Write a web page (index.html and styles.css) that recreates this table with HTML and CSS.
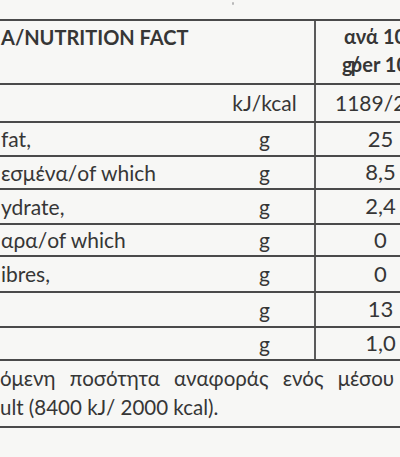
FILE: index.html
```html
<!DOCTYPE html>
<html lang="el">
<head>
  <meta charset="UTF-8" />
  <meta name="viewport" content="width=device-width, initial-scale=1.0"/>
  <title>Nutrition facts</title>
  <link rel="stylesheet" href="styles.css">
</head>
<body>

<div class="sheet">
  <span class="speck"></span>

  <table class="facts">
    <!-- header -->
    <tr class="head">
      <th class="name">A/NUTRITION FACT</th>
      <th class="unit"></th>
      <th class="val">ανά 100 g<br>g<span class="slash">/</span>per 100 g</th>
    </tr>

    <tr class="energy">
      <td class="name"></td>
      <td class="unit">kJ/kcal</td>
      <td class="val">1189/284</td>
    </tr>
    <tr class="r1">
      <td class="name">fat,</td>
      <td class="unit">g</td>
      <td class="val">25</td>
    </tr>
    <tr class="r2">
      <td class="name">εσμένα/of which</td>
      <td class="unit">g</td>
      <td class="val">8,5</td>
    </tr>
    <tr class="r3">
      <td class="name">ydrate,</td>
      <td class="unit">g</td>
      <td class="val">2,4</td>
    </tr>
    <tr class="r4">
      <td class="name">αρα/of which</td>
      <td class="unit">g</td>
      <td class="val">0</td>
    </tr>
    <tr class="r5">
      <td class="name">ibres,</td>
      <td class="unit">g</td>
      <td class="val">0</td>
    </tr>
    <tr class="r6">
      <td class="name"></td>
      <td class="unit">g</td>
      <td class="val">13</td>
    </tr>
    <tr class="r7">
      <td class="name"></td>
      <td class="unit">g</td>
      <td class="val">1,0</td>
    </tr>

    <!-- footnote -->
    <tr class="note">
      <td colspan="3">
        <p class="note-line wide">όμενη ποσότητα αναφοράς ενός μέσου</p>
        <p class="note-line">ult (8400 kJ/ 2000 kcal).</p>
      </td>
    </tr>
  </table>
</div>

</body>
</html>
```

FILE: styles.css
```css
html, body {
  margin: 0;
  padding: 0;
  height: 100%;
  overflow: hidden;
  background: #f7f7f5;
}

.sheet {
  position: relative;
  padding-top: 19px;
  width: 460px;
  font-family: 'Lato', 'Open Sans', sans-serif;
  font-size: 21px;
  color: #363636;
}

/* little dust mark on the scan */
.speck {
  position: absolute;
  top: 2px;
  left: 232px;
  width: 2px;
  height: 3px;
  background: #b8b8b8;
  border-radius: 1px;
}

.facts {
  border-collapse: collapse;
  width: 460px;
  table-layout: fixed;
}

.facts th,
.facts td {
  padding: 0;
  border-top: 2px solid #4a4a4a;
  border-bottom: 2px solid #4a4a4a;
  vertical-align: middle;
  line-height: 1.2;
}

.facts .name {
  width: 214px;
  text-align: left;
  padding-left: 1px;
  white-space: nowrap;
  overflow: hidden;
}

.facts .unit {
  width: 99px;
  text-align: center;
}

.facts .val {
  width: 145px;
  text-align: left;
  padding-left: 0;
  border-left: 2px solid #5a5a5a;
  white-space: nowrap;
}

.facts td.val {
  text-align: center;
  padding-right: 24px;
  font-size: 22px;
}

.head th {
  height: 58px;
  font-size: 20px;
  font-weight: 700;
}

.head .name {
  vertical-align: top;
  padding-top: 4px;
}

.head .val {
  text-align: center;
  line-height: 28px;
  padding-right: 8px;
  padding-bottom: 4px;
}

.slash {
  margin-left: -2px;
  margin-right: -9px;
}

.energy td { height: 36px; }
.r1 td { height: 32px; }
.r2 td { height: 31px; }
.r3 td { height: 33px; }
.r4 td { height: 30px; }
.r5 td { height: 34px; }
.r6 td { height: 33px; }
.r7 td { height: 31px; }

.energy td.val {
  text-align: left;
  padding-left: 19px;
  padding-right: 0;
  font-size: 21px;
}

.note td {
  height: 65px;
  padding: 0;
  vertical-align: top;
}

.note-line {
  margin: 0;
  font-size: 20.5px;
  white-space: nowrap;
  line-height: 29px;
}

.note-line.wide {
  padding-top: 3px;
  word-spacing: 9px;
}
```
